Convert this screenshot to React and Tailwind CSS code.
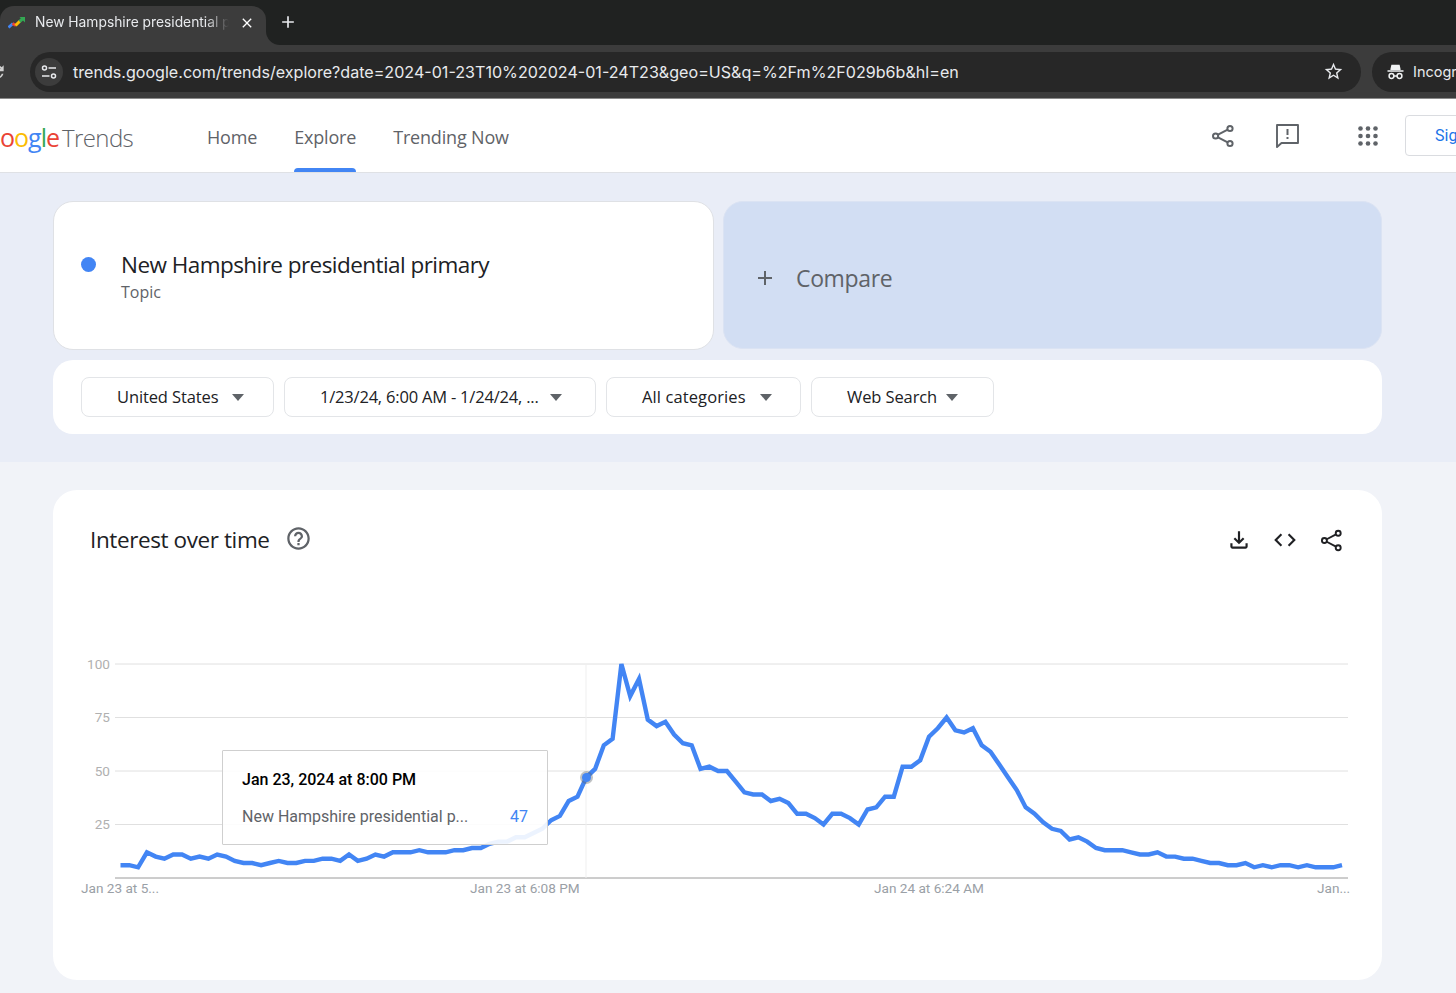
import React from "react";
import {
  MdOutlineFileDownload, MdCode, MdHelpOutline, MdAdd, MdStarBorder, MdClose, MdRefresh,
} from "react-icons/md";

const values = [6,6,5,12,10,9,11,11,9,10,9,11,10,8,7,7,6,7,8,7,7,8,8,9,9,8,11,8,9,11,10,12,12,12,13,12,12,12,13,13,14,14,16,17,17,19,19,21,23,27,29,36,38,47,51,62,65,100,
85,93,74,71,73,67,63,62,51,52,50,50,45,40,39,39,36,37,35,30,30,28,25,30,30,28,25,32,33,38,38,52,52,55,66,70,75,69,68,70,62,59,53,
47,41,33,30,26,23,22,18,19,17,14,13,13,13,12,11,11,12,10,10,9,9,8,7,7,6,6,7,5,6,5,6,6,5,6,5,5,5,6];

// Chart coordinates: svg origin sits at page (70, 650)
const X0 = 50.5, STEP = 8.788, Y0 = 228, UNIT = 2.14;
const points = values.map((v, i) => `${(X0 + i * STEP).toFixed(1)},${(Y0 - v * UNIT).toFixed(1)}`).join(" ");
const gsans = "font-['Open_Sans',sans-serif]";

function Favicon() {
  return (
    <svg width="17" height="12" viewBox="0 0 17 12" fill="none" strokeWidth="3" className="shrink-0">
      <path d="M0.5 10.5 L5 6.5" stroke="#4285f4" />
      <path d="M4.5 6.5 L8 8.5" stroke="#ea4335" />
      <path d="M7.5 8.5 L12 4" stroke="#fbbc04" />
      <path d="M11.5 4.5 L15 1.5" stroke="#34a853" />
      <path d="M11.5 0 H17 V5.5 Z" fill="#34a853" stroke="none" />
    </svg>
  );
}

function Tune() {
  return (
    <svg width="16" height="16" viewBox="0 0 16 16" fill="none" stroke="#e8eaed" strokeWidth="1.5">
      <circle cx="3.5" cy="4" r="2" />
      <path d="M7.5 4 H15" />
      <path d="M1 12 H8.5" />
      <circle cx="12.5" cy="12" r="2" />
    </svg>
  );
}

function Incognito() {
  return (
    <svg width="17" height="16" viewBox="0 0 17 16" fill="none" stroke="#f1f3f4" strokeWidth="1.5">
      <path d="M4 6 L5 1.5 H12 L13 6" fill="#f1f3f4" />
      <path d="M0.5 7 H16.5" />
      <circle cx="4.5" cy="12" r="2.4" />
      <circle cx="12.5" cy="12" r="2.4" />
      <path d="M7 12 H10" />
    </svg>
  );
}

function ShareIcon({ size = 24 }) {
  return (
    <svg width={size} height={size} viewBox="0 0 24 24" fill="none" stroke="currentColor" strokeWidth="2" className="shrink-0">
      <circle cx="19" cy="4.5" r="2.6" />
      <circle cx="4.6" cy="12" r="2.6" />
      <circle cx="19" cy="19.5" r="2.6" />
      <path d="M7 10.7 L16.7 5.7" />
      <path d="M7 13.3 L16.7 18.3" />
    </svg>
  );
}

function FeedbackIcon() {
  return (
    <svg width="23" height="24" viewBox="0 0 23 24" fill="none" className="shrink-0">
      <path d="M1 1 H22 V19 H5.5 L1 23 Z" stroke="currentColor" strokeWidth="1.9" strokeLinejoin="round" />
      <path d="M11.5 5 V11" stroke="currentColor" strokeWidth="2" />
      <path d="M11.5 13 V15" stroke="currentColor" strokeWidth="2" />
    </svg>
  );
}

function AppsIcon() {
  const c = [2.5, 10, 17.5];
  return (
    <svg width="20" height="20" viewBox="0 0 20 20" fill="currentColor" className="shrink-0">
      {c.map((y) => c.map((x) => <circle key={`${x}-${y}`} cx={x} cy={y} r="2.3" />))}
    </svg>
  );
}

function Filter({ label, w, gap, track }) {
  return (
    <div className={`${w} h-10 shrink-0 flex items-center pl-[35px] pt-[1px] rounded-lg border border-[#e3e5e8] bg-white`}>
      <span className={`text-[16.5px] whitespace-nowrap ${track} text-[#202124] ${gsans}`}>{label}</span>
      <span className={`${gap} w-0 h-0 border-x-[6px] border-x-transparent border-t-[7px] border-t-[#5f6368]`} />
    </div>
  );
}

export default function App() {
  return (
    <div className="w-[1456px] h-[993px] overflow-hidden bg-[#f1f3f8] font-['Roboto',sans-serif]">
      {/* Tab strip */}
      <div className="h-[45px] bg-[#202221] flex items-end">
        <div className="w-[266px] h-[39px] bg-[#3c3c3c] rounded-t-[14px] flex items-center pl-[8px] pb-[6px] shrink-0">
          <Favicon />
          <span className="ml-[10px] w-[194px] shrink-0 overflow-hidden whitespace-nowrap text-[13.8px] text-[#e8eaed] font-['Inter',sans-serif] [mask-image:linear-gradient(to_right,black_88%,transparent)]">
            New Hampshire presidential primary
          </span>
          <MdClose className="ml-[10px] text-white shrink-0" size={16} />
        </div>
        <div className="relative w-[14px] h-[14px] bg-[#3c3c3c] shrink-0">
          <div className="w-full h-full bg-[#202221] rounded-bl-[14px]" />
        </div>
        <MdAdd className="ml-[-2px] mb-[13px] text-[#e8eaed] shrink-0" size={20} />
      </div>

      {/* Toolbar */}
      <div className="h-[54px] bg-[#3c3c3c] border-b border-[#8a8a8a] flex items-center">
        <MdRefresh className="ml-[-13px] text-[#d0d0d0] shrink-0" size={20} />
        <div className="ml-[23px] w-[1331px] h-[40px] shrink-0 rounded-full bg-[#272727] flex items-center pl-[5px] pr-[17px]">
          <div className="w-[28px] h-[28px] rounded-full bg-[#3c3c3c] flex items-center justify-center shrink-0">
            <Tune />
          </div>
          <span className="ml-[10px] mt-[1px] text-[16.1px] text-[#e8eaed] whitespace-nowrap font-['Inter',sans-serif]">
            trends.google.com/trends/explore?date=2024-01-23T10%202024-01-24T23&geo=US&q=%2Fm%2F029b6b&hl=en
          </span>
          <MdStarBorder className="ml-auto text-[#e8eaed] shrink-0" size={21} />
        </div>
        <div className="ml-[11px] h-[40px] w-[120px] shrink-0 rounded-full bg-[#272727] flex items-center pl-[15px]">
          <Incognito />
          <span className="ml-[9px] text-[14.5px] text-[#e8eaed] font-['Inter',sans-serif]">Incognito</span>
        </div>
      </div>

      {/* App header */}
      <header className="relative h-[74px] bg-white border-b border-[#dfe1e5] flex items-center">
        <div className="ml-[0px] w-[141px] mt-[4px] shrink-0 flex items-baseline text-[25px] font-['Open_Sans',sans-serif] tracking-[-1px]">
          <span className="text-[#ea4335]">o</span>
          <span className="text-[#fbbc04]">o</span>
          <span className="text-[#4285f4]">g</span>
          <span className="text-[#34a853]">l</span>
          <span className="text-[#ea4335]">e</span>
          <span className="ml-[3px] text-[24px] font-light text-[#5f6368] tracking-[-0.6px]">Trends</span>
        </div>
        <nav className={`ml-[66px] mt-[4px] flex items-center gap-[37px] text-[18px] text-[#5f6368] tracking-[-0.18px] ${gsans}`}>
          <span>Home</span>
          <span className="relative">
            Explore
            <span className="absolute left-0 right-0 bottom-[-21px] h-[4px] rounded-t-[4px] bg-[#4285f4]" />
          </span>
          <span>Trending Now</span>
        </nav>
        <div className="ml-auto flex items-center text-[#5f6368] shrink-0">
          <ShareIcon size={24} />
          <span className="ml-[41px]"><FeedbackIcon /></span>
          <span className="ml-[59px]"><AppsIcon /></span>
          <div className="ml-[27px] mr-[-50px] w-[101px] h-[41px] rounded border border-[#dadce0] flex items-center pl-[29px] text-[16px] text-[#1a73e8]">
            Sign in
          </div>
        </div>
      </header>

      {/* Search band */}
      <section className="h-[289px] bg-[#e9edf7] pl-[53px] pr-[74px] pt-[28px]">
        <div className="flex gap-[10px] h-[150px]">
          <div className="w-[661px] h-[149px] rounded-[20px] bg-white border border-[#dfe1e5] flex items-center pl-[27px]">
            <span className="w-[15px] h-[15px] rounded-full bg-[#4285f4] mb-[22px] shrink-0" />
            <div className={`ml-[25px] mt-[3px] ${gsans}`}>
              <div className="text-[22.5px] leading-[30px] tracking-[-0.55px] text-[#202124]">New Hampshire presidential primary</div>
              <div className="text-[16px] leading-[24px] text-[#5f6368]">Topic</div>
            </div>
          </div>
          <div className="flex-1 ml-[-1px] h-[148px] rounded-[20px] bg-[#d2def3] border border-[#dbe3f3] flex items-center pl-[29px] pt-[6px]">
            <MdAdd className="text-[#5f6368] shrink-0" size={24} />
            <span className={`ml-[19px] text-[23px] text-[#5f6368] tracking-[-0.35px] ${gsans}`}>Compare</span>
          </div>
        </div>
        <div className="mt-[9px] h-[74px] rounded-[20px] bg-white flex items-center pl-[28px] gap-[10px]">
          <Filter label="United States" w="w-[193px]" gap="ml-[14px]" track="tracking-[-0.12px]" />
          <Filter label="1/23/24, 6:00 AM - 1/24/24, ..." w="w-[312px]" gap="ml-[11px]" track="tracking-[-0.2px]" />
          <Filter label="All categories" w="w-[195px]" gap="ml-[14px]" track="tracking-[0.1px]" />
          <Filter label="Web Search" w="w-[183px]" gap="ml-[9px]" track="tracking-[-0.1px]" />
        </div>
      </section>

      {/* Interest over time */}
      <section className="pl-[53px] pr-[74px] pt-[28px]">
        <div className="h-[490px] rounded-[24px] bg-white">
          <div className="h-[160px] flex items-start pl-[37px] pr-[38px] pt-[34px]">
            <h2 className={`text-[22.5px] leading-[32px] tracking-[-0.4px] text-[#202124] ${gsans}`}>Interest over time</h2>
            <MdHelpOutline className="ml-[15px] mt-[1px] text-[#5f6368] shrink-0" size={27} />
            <div className="ml-auto mt-[3px] flex items-center gap-[20px] text-[#202124]">
              <MdOutlineFileDownload size={26} />
              <MdCode size={26} />
              <span className="w-[26px] flex justify-center"><ShareIcon size={23} /></span>
            </div>
          </div>
          <div className="relative ml-[17px] w-[1290px] h-[250px]">
            <svg width="1290" height="250" viewBox="0 0 1290 250" className="block">
              {[14, 67.5, 121, 174.5].map((y) => (
                <line key={y} x1="45" x2="1278" y1={y} y2={y} stroke="#e0e0e0" strokeWidth="1" />
              ))}
              <line x1="45" x2="1278" y1="228" y2="228" stroke="#9a9a9a" strokeWidth="1" />
              <line x1="516" x2="516" y1="14" y2="228" stroke="#efefef" strokeWidth="1" />
              <g fontFamily="Roboto, sans-serif" fontSize="13.6" fill="#b0b0b0">
                <text x="40" y="18.5" textAnchor="end">100</text>
                <text x="40" y="72" textAnchor="end">75</text>
                <text x="40" y="125.5" textAnchor="end">50</text>
                <text x="40" y="179" textAnchor="end">25</text>
                <text x="11" y="242.5" fill="#9aa0a6">Jan 23 at 5...</text>
                <text x="400" y="242.5" fill="#9aa0a6">Jan 23 at 6:08 PM</text>
                <text x="804" y="242.5" fill="#9aa0a6">Jan 24 at 6:24 AM</text>
                <text x="1247" y="242.5" fill="#9aa0a6">Jan...</text>
              </g>
              <polyline points={points} fill="none" stroke="#4285f4" strokeWidth="4.4" strokeLinejoin="miter" />
              <circle cx="516.5" cy="127.5" r="6.5" fill="#5f6368" fillOpacity="0.4" />
              <circle cx="516.5" cy="127.5" r="4.5" fill="#4285f4" />
            </svg>
            <div className="absolute left-[152px] top-[100px] w-[326px] h-[95px] bg-white/90 border border-[#cfcfcf] rounded-[1px] pl-[19px] pr-[19px] pt-[19px]">
              <div className="text-[16px] leading-[20px] font-medium text-[#000]">Jan 23, 2024 at 8:00 PM</div>
              <div className="mt-[17px] flex justify-between text-[16px] leading-[20px] text-[#5f6368]">
                <span>New Hampshire presidential p...</span>
                <span className="text-[#4285f4]">47</span>
              </div>
            </div>
          </div>
        </div>
      </section>
    </div>
  );
}
